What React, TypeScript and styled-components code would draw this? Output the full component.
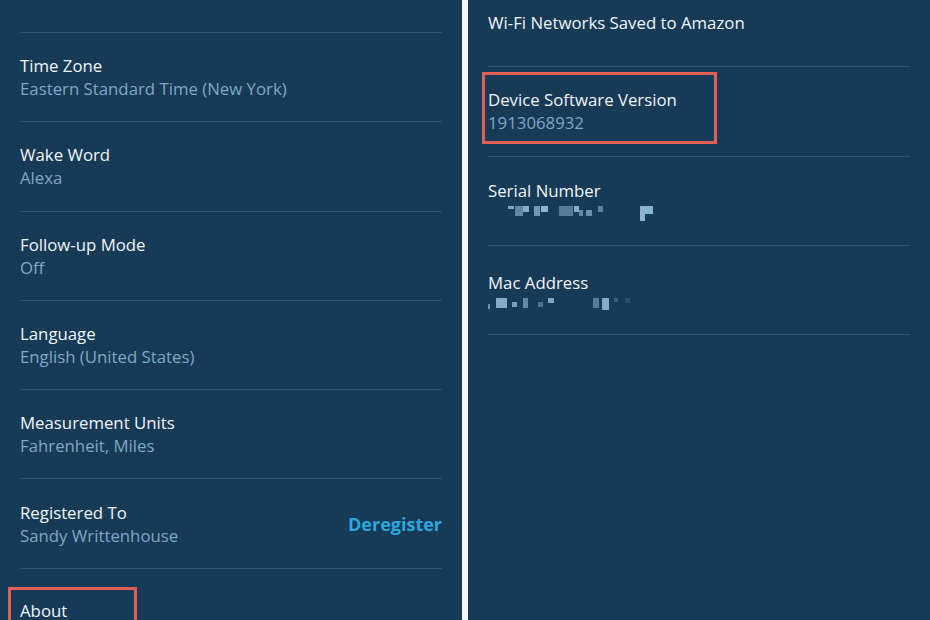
import React from 'react';
import styled, { createGlobalStyle } from 'styled-components';

const GlobalStyle = createGlobalStyle`
  html, body {
    margin: 0;
    padding: 0;
    background: #f4f7fa;
    font-family: 'Open Sans', 'Noto Sans', sans-serif;
  }
  #root {
    width: 930px;
    height: 620px;
    overflow: hidden;
  }
`;

const Screen = styled.div`
  display: grid;
  grid-template-columns: 462px 468px;
  height: 620px;
  background: #f4f7fa;
`;

const Panel = styled.div<{ $side: 'left' | 'right' }>`
  background: #173a56;
  overflow: hidden;
  padding: ${p => (p.$side === 'left' ? '32px 20px 0 20px' : '0 20px 0 20px')};
  margin-left: ${p => (p.$side === 'right' ? '6px' : '0')};
  box-sizing: border-box;
`;

const List = styled.div<{ $offset?: number }>`
  display: flex;
  flex-direction: column;
  margin-top: ${p => p.$offset ?? 0}px;
`;

const Row = styled.div<{ $top?: boolean; $tall?: boolean }>`
  position: relative;
  display: flex;
  justify-content: space-between;
  box-sizing: border-box;
  height: 89.3px;
  flex-shrink: 0;
  padding: ${p => (p.$tall ? '30px 0 0 0' : '0')};
  align-items: ${p => (p.$tall ? 'flex-start' : 'center')};
  border-top: ${p => (p.$top ? '1px solid #2b5373' : 'none')};
  border-bottom: ${p => (p.$top ? 'none' : '1px solid #2b5373')};
`;

const Text = styled.div`
  display: flex;
  flex-direction: column;
`;

const Title = styled.div`
  color: #f1f5f8;
  font-size: 16.8px;
  line-height: 23px;
`;

const Value = styled.div`
  color: #7ea8c7;
  font-size: 16.8px;
  line-height: 23px;
`;

const Action = styled.button`
  background: none;
  border: none;
  padding: 0;
  color: #2aa8dc;
  font-family: inherit;
  font-size: 18px;
  font-weight: 700;
  cursor: pointer;
`;

const Highlight = styled.div<{ $l: number; $t: number; $w: number; $h: number }>`
  position: absolute;
  left: ${p => p.$l}px;
  top: ${p => p.$t}px;
  width: ${p => p.$w}px;
  height: ${p => p.$h}px;
  border: 3px solid #e25f56;
  box-sizing: border-box;
  pointer-events: none;
`;

const Blur = styled.svg<{ $indent: number }>`
  display: block;
  margin-top: 4px;
  margin-left: ${p => p.$indent}px;
`;

const serialBlocks = [
  [0, 0, 6, 3, 0.75],
  [7, 0, 8, 10, 0.55],
  [15, 0, 6, 6, 0.8],
  [26, 0, 6, 10, 0.65],
  [33, 0, 7, 6, 0.85],
  [51, 0, 14, 10, 0.45],
  [66, 0, 5, 6, 0.8],
  [71, 4, 4, 6, 0.55],
  [78, 4, 6, 6, 0.6],
  [90, 0, 5, 6, 0.5],
  [132, 0, 13, 8, 0.85],
  [132, 8, 5, 7, 0.85],
];

const macBlocks = [
  [0, 6, 2, 5, 0.6],
  [8, 0, 11, 10, 0.8],
  [24, 4, 5, 5, 0.7],
  [35, 0, 5, 10, 0.55],
  [50, 4, 5, 5, 0.4],
  [60, 0, 6, 5, 0.75],
  [105, 0, 6, 10, 0.45],
  [114, 0, 7, 12, 0.8],
  [126, 0, 4, 4, 0.25],
  [137, 0, 5, 5, 0.15],
];

const Pixelated = ({ blocks, w, h, indent = 0 }: { blocks: number[][]; w: number; h: number; indent?: number }) => (
  <Blur $indent={indent} width={w} height={h} viewBox={`0 0 ${w} ${h}`}>
    {blocks.map(([x, y, bw, bh, o], i) => (
      <rect key={i} x={x} y={y} width={bw} height={bh} fill="#9fcbe6" opacity={o} />
    ))}
  </Blur>
);

const leftRows = [
  { title: 'Time Zone', value: 'Eastern Standard Time (New York)' },
  { title: 'Wake Word', value: 'Alexa' },
  { title: 'Follow-up Mode', value: 'Off' },
  { title: 'Language', value: 'English (United States)' },
  { title: 'Measurement Units', value: 'Fahrenheit, Miles' },
];

const App = () => (
  <>
    <GlobalStyle />
    <Screen>
      <Panel $side="left">
        <List>
          {leftRows.map(r => (
            <Row key={r.title} $top>
              <Text>
                <Title>{r.title}</Title>
                <Value>{r.value}</Value>
              </Text>
            </Row>
          ))}
          <Row $top>
            <Text>
              <Title>Registered To</Title>
              <Value>Sandy Writtenhouse</Value>
            </Text>
            <Action>Deregister</Action>
          </Row>
          <Row $top $tall>
            <Text>
              <Title>About</Title>
            </Text>
            <Highlight $l={-12} $t={18} $w={129} $h={60} />
          </Row>
        </List>
      </Panel>
      <Panel $side="right">
        <List $offset={-22}>
          <Row>
            <Title>Wi-Fi Networks Saved to Amazon</Title>
          </Row>
          <Row>
            <Text>
              <Title>Device Software Version</Title>
              <Value>1913068932</Value>
            </Text>
            <Highlight $l={-6} $t={5} $w={235} $h={72} />
          </Row>
          <Row>
            <Text>
              <Title>Serial Number</Title>
              <Pixelated blocks={serialBlocks} w={146} h={16} indent={20} />
            </Text>
          </Row>
          <Row>
            <Text>
              <Title>Mac Address</Title>
              <Pixelated blocks={macBlocks} w={146} h={12} />
            </Text>
          </Row>
        </List>
      </Panel>
    </Screen>
  </>
);

export default App;
